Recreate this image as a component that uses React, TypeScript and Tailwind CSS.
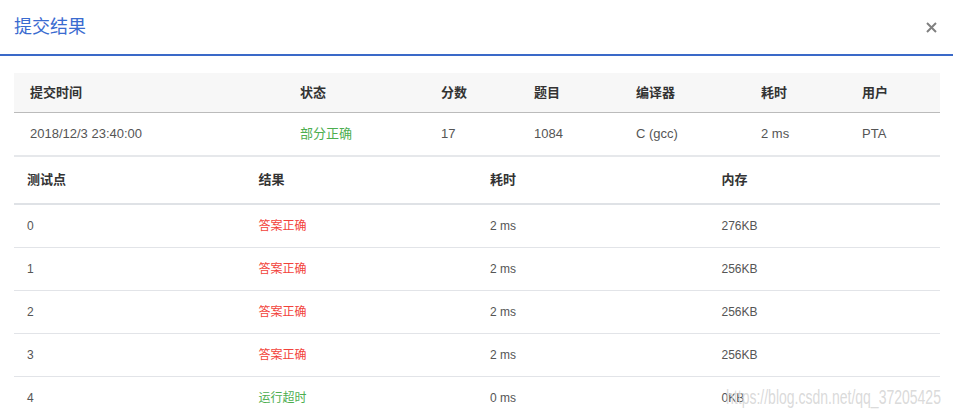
import React from "react";

const font = { fontFamily: '"Liberation Sans", "Noto Sans CJK SC", sans-serif' };

const summaryHead = ["提交时间", "状态", "分数", "题目", "编译器", "耗时", "用户"];

const cases = [
	{ id: "0", result: "答案正确", ok: true, time: "2 ms", mem: "276KB" },
	{ id: "1", result: "答案正确", ok: true, time: "2 ms", mem: "256KB" },
	{ id: "2", result: "答案正确", ok: true, time: "2 ms", mem: "256KB" },
	{ id: "3", result: "答案正确", ok: true, time: "2 ms", mem: "256KB" },
	{ id: "4", result: "运行超时", ok: false, time: "0 ms", mem: "0KB" },
];

function CloseIcon()
{
	return (
		<svg width="11" height="11" viewBox="0 0 11 11" className="text-[#808080]">
			<path d="M1 1 L10 10 M10 1 L1 10" stroke="currentColor" strokeWidth="2" />
		</svg>
	);
}

export default function App()
{
	return (
		<div className="relative w-full h-[413px] overflow-hidden bg-white" style={ font }>
			<header className="flex items-center justify-between h-[56px] pl-[14px] pr-[16px] border-b-2 border-[#3a69c8]">
				<h2 className="text-[18px] text-[#3a6bd0] leading-none">提交结果</h2>
				<button className="flex items-center"><CloseIcon /></button>
			</header>

			<div className="mt-[17px] ml-[14px] mr-[13px]">
				{/* summary */}
				<div className="grid grid-cols-[270px_141px_93px_102px_125px_101px_94px] h-[40px] items-center bg-[#f7f7f7] border-b border-[#bbbbbb] text-[13px] font-semibold text-[#333]">
					{ summaryHead.map( h => <div key={ h } className="pl-[16px]">{ h }</div> ) }
				</div>
				<div className="grid grid-cols-[270px_141px_93px_102px_125px_101px_94px] h-[44px] items-center border-b-2 border-[#e6e8eb] text-[13px] text-[#555]">
					<div className="pl-[16px]">2018/12/3 23:40:00</div>
					<div className="pl-[16px] text-[#4cae4f]">部分正确</div>
					<div className="pl-[16px]">17</div>
					<div className="pl-[16px]">1084</div>
					<div className="pl-[16px]">C (gcc)</div>
					<div className="pl-[16px]">2 ms</div>
					<div className="pl-[16px]">PTA</div>
				</div>

				{/* test cases */}
				<div className="grid grid-cols-4 h-[48px] items-center border-b-2 border-[#dfe2e6] text-[13px] font-semibold text-[#333]">
					<div className="pl-[13px]">测试点</div>
					<div className="pl-[13px]">结果</div>
					<div className="pl-[13px]">耗时</div>
					<div className="pl-[13px]">内存</div>
				</div>
				{ cases.map( c => (
					<div key={ c.id } className="grid grid-cols-4 h-[43px] items-center border-b border-[#e2e4e8] text-[12px] text-[#555]">
						<div className="pl-[13px]">{ c.id }</div>
						<div className={ `pl-[13px] ${ c.ok ? "text-[#f2423a]" : "text-[#4cae4f]" }` }>{ c.result }</div>
						<div className="pl-[13px]">{ c.time }</div>
						<div className="pl-[13px]">{ c.mem }</div>
					</div>
				)) }
			</div>

			<div className="absolute right-[12px] top-[387px] text-[20px] leading-none text-[#d6d6d6]/90 origin-right scale-x-[0.7] whitespace-nowrap pointer-events-none">
				https://blog.csdn.net/qq_37205425
			</div>
		</div>
	);
}
